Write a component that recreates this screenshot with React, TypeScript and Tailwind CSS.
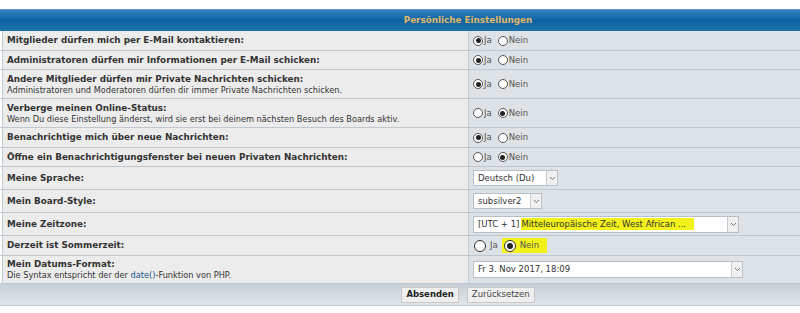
import React from 'react'

const font = { fontFamily: '"DejaVu Sans", Verdana, sans-serif' }

interface RadioProps {
    checked: boolean;
    label: string;
    big?: boolean;
}

const Radio = ({ checked, label, big }: RadioProps) => (
    <span className="flex items-center">
        <span
            className={`flex items-center justify-center rounded-full border bg-white ${
                big ? 'w-[12px] h-[12px] border-[#333]' : 'w-[10px] h-[10px] border-[#555]'
            }`}
        >
            {checked && <span className={`rounded-full bg-[#222] ${big ? 'w-[6px] h-[6px]' : 'w-[5px] h-[5px]'}`} />}
        </span>
        <span className={`text-[8.5px] text-[#555] ${big ? 'ml-[4px]' : 'ml-[1px]'}`}>{label}</span>
    </span>
)

const JaNein = ({ value, big }: { value: 'ja' | 'nein'; big?: boolean }) =>
    big ? (
        <div className="flex items-center pl-[5px]">
            <Radio checked={value === 'ja'} label="Ja" big />
            <span className="ml-[4px] flex items-center bg-[#f2f21a] pl-[2px] pr-[8px] py-[1px] text-[#555]">
                <Radio checked={value === 'nein'} label="Nein" big />
            </span>
        </div>
    ) : (
        <div className="flex items-center gap-x-[6px] pl-[4px]">
            <Radio checked={value === 'ja'} label="Ja" />
            <Radio checked={value === 'nein'} label="Nein" />
        </div>
    )

const Arrow = () => (
    <span className="ml-auto flex h-full w-[11px] items-center justify-center border-l border-[#c8ccd0] bg-[#f0f0f0]">
        <svg width="7" height="5" viewBox="0 0 7 5">
            <path d="M1 1 L3.5 3.5 L6 1" fill="none" stroke="#777" strokeWidth="1" />
        </svg>
    </span>
)

const Select = ({ width, height, children }: { width: string; height: string; children: React.ReactNode }) => (
    <div className={`ml-[4px] flex items-center border border-[#b7c0c8] bg-white ${width} ${height}`}>
        <span className="flex items-center pl-[4px] text-[8.5px] text-[#333] whitespace-nowrap">{children}</span>
        <Arrow />
    </div>
)

type Row = {
    label: string;
    desc?: React.ReactNode;
    h: string;
    right: React.ReactNode;
}

const rows: Row[] = [
    { label: 'Mitglieder dürfen mich per E-Mail kontaktieren:', h: 'h-[20px]', right: <JaNein value="ja" /> },
    { label: 'Administratoren dürfen mir Informationen per E-Mail schicken:', h: 'h-[19px]', right: <JaNein value="ja" /> },
    {
        label: 'Andere Mitglieder dürfen mir Private Nachrichten schicken:',
        desc: 'Administratoren und Moderatoren dürfen dir immer Private Nachrichten schicken.',
        h: 'h-[29px]',
        right: <JaNein value="ja" />,
    },
    {
        label: 'Verberge meinen Online-Status:',
        desc: 'Wenn Du diese Einstellung änderst, wird sie erst bei deinem nächsten Besuch des Boards aktiv.',
        h: 'h-[29px]',
        right: <JaNein value="nein" />,
    },
    { label: 'Benachrichtige mich über neue Nachrichten:', h: 'h-[20px]', right: <JaNein value="ja" /> },
    { label: 'Öffne ein Benachrichtigungsfenster bei neuen Privaten Nachrichten:', h: 'h-[19px]', right: <JaNein value="nein" /> },
    {
        label: 'Meine Sprache:',
        h: 'h-[23px]',
        right: <Select width="w-[85px]" height="h-[16px]">Deutsch (Du)</Select>,
    },
    {
        label: 'Mein Board-Style:',
        h: 'h-[23px]',
        right: <Select width="w-[69px]" height="h-[16px]">subsilver2</Select>,
    },
    {
        label: 'Meine Zeitzone:',
        h: 'h-[23px]',
        right: (
            <Select width="w-[266px]" height="h-[17px]">
                [UTC + 1]{' '}
                <span className="ml-[2px] bg-[#f2f21a] pr-[8px]">Mitteleuropäische Zeit, West African ...</span>
            </Select>
        ),
    },
    { label: 'Derzeit ist Sommerzeit:', h: 'h-[20px]', right: <JaNein value="nein" big /> },
    {
        label: 'Mein Datums-Format:',
        desc: (
            <>
                Die Syntax entspricht der der <span className="text-[#105289]">date()</span>-Funktion von PHP.
            </>
        ),
        h: 'h-[28px]',
        right: <Select width="w-[270px]" height="h-[17px]">Fr 3. Nov 2017, 18:09</Select>,
    },
]

const App = () => {
    return (
        <div className="w-[800px] h-[313px] overflow-hidden bg-white" style={font}>
            <div className="w-[936px] pt-[9px]">
                <div className="h-[22px] flex items-center justify-center border-t border-[#5b9acb] bg-gradient-to-b from-[#2f80bd] via-[#0b64a2] to-[#1f73ab]">
                    <span className="text-[8.8px] font-bold text-[#e0b768]">Persönliche Einstellungen</span>
                </div>
                {rows.map((row) => (
                    <div key={row.label} className={`grid grid-cols-2 border-b border-[#bfc8d0] ${row.h}`}>
                        <div className="flex flex-col justify-center border-l border-[#c3cbd3] ml-[2px] bg-[#ececec] pl-[4px]">
                            <div className="text-[8.8px] font-bold leading-[11px] text-[#333]">{row.label}</div>
                            {row.desc && <div className="text-[8.2px] leading-[10px] text-[#333]">{row.desc}</div>}
                        </div>
                        <div className="flex items-center border-l border-[#c3cbd3] bg-[#dde2e6]">{row.right}</div>
                    </div>
                ))}
                <div className="h-[22px] flex items-center justify-center gap-x-[8px] border-b border-[#c3cbd3] bg-gradient-to-b from-[#c6cfd7] to-[#e1e6ea]">
                    <span className="flex h-[16px] items-center border border-[#c9c9c9] bg-[#efefef] px-[4px] text-[8.5px] font-bold text-[#222]">
                        Absenden
                    </span>
                    <span className="flex h-[16px] items-center border border-[#c9c9c9] bg-[#efefef] px-[4px] text-[8.5px] text-[#444]">
                        Zurücksetzen
                    </span>
                </div>
            </div>
        </div>
    )
}

export default App
